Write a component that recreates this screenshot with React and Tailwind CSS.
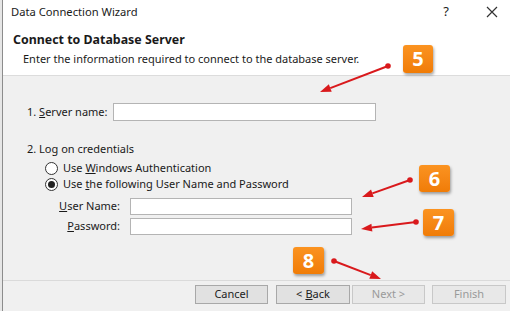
import React from "react";

const font = { fontFamily: '"Noto Sans", "Open Sans", sans-serif' };

function Badge({ n, cls }) {
  return (
    <div
      className={`absolute flex items-center justify-center rounded-[3px] bg-gradient-to-b from-[#fb9320] to-[#f07c06] text-white font-bold text-[20px] leading-none shadow-[1px_2px_3px_rgba(0,0,0,0.35)] ${cls}`}
    >
      {n}
    </div>
  );
}

function Arrow({ x1, y1, x2, y2 }) {
  const dx = x2 - x1;
  const dy = y2 - y1;
  const len = Math.hypot(dx, dy);
  const ux = dx / len;
  const uy = dy / len;
  const hl = 11;
  const hw = 4;
  const bx = x2 - ux * hl;
  const by = y2 - uy * hl;
  const p1 = `${x2},${y2}`;
  const p2 = `${bx - uy * hw},${by + ux * hw}`;
  const p3 = `${bx + uy * hw},${by - ux * hw}`;
  return (
    <g>
      <line x1={x1} y1={y1} x2={bx} y2={by} stroke="#d9191c" strokeWidth="2" />
      <circle cx={x1} cy={y1} r="2.8" fill="#d9191c" />
      <polygon points={`${p1} ${p2} ${p3}`} fill="#d9191c" />
    </g>
  );
}

function Radio({ checked }) {
  return (
    <span className="w-[13px] h-[13px] rounded-full border border-[#333] bg-white flex items-center justify-center shrink-0">
      {checked && <span className="w-[7px] h-[7px] rounded-full bg-[#222]" />}
    </span>
  );
}

function Btn({ children, disabled }) {
  return (
    <div
      className={`h-[19px] flex items-center justify-center border text-[11px] ${
        disabled
          ? "border-[#c8c8c8] bg-[#e8e8e8] text-[#9a9a9a]"
          : "border-[#a8a8a8] bg-[#e1e1e1] text-[#222]"
      }`}
    >
      {children}
    </div>
  );
}

export default function App() {
  return (
    <div
      className="relative w-[510px] h-[311px] overflow-hidden bg-[#ececec] flex text-[#1a1a1a]"
      style={font}
    >
      <div className="w-[2px] bg-[#e6e6e6] shrink-0" />
      <div className="flex-1 flex flex-col border-l border-[#8c8c8c] bg-[#f0f0f0]">
        {/* Header */}
        <div className="h-[76px] bg-white border-b border-[#dcdcdc] flex flex-col shrink-0">
          <div className="h-[24px] flex items-center pl-[8px] pr-[12px] text-[11.2px]">
            <span>Data Connection Wizard</span>
            <span className="ml-auto mr-[37px] text-[13px]">?</span>
            <svg width="12" height="12" viewBox="0 0 12 12">
              <path d="M1 1L11 11M11 1L1 11" stroke="#333" strokeWidth="1.2" />
            </svg>
          </div>
          <div className="pl-[10px] pt-[7px] text-[12.4px] font-bold leading-[18px]">
            Connect to Database Server
          </div>
          <div className="pl-[20px] pt-[1px] text-[11px] leading-[18px]">
            Enter the information required to connect to the database server.
          </div>
        </div>

        {/* Body */}
        <div className="flex-1 flex flex-col pl-[24px] text-[11px]">
          <div className="mt-[27px] h-[18px] flex items-center">
            <span className="w-[86px]">
              1. <span className="underline">S</span>erver name:
            </span>
            <div className="w-[263px] h-[18px] bg-white border border-[#b4b4b4]" />
          </div>
          <div className="mt-[20px] h-[16px] flex items-center">2. Log on credentials</div>
          <div className="mt-[3px] h-[16px] flex items-center pl-[18px] gap-[5px]">
            <Radio />
            <span>
              Use <span className="underline">W</span>indows Authentication
            </span>
          </div>
          <div className="h-[16px] flex items-center pl-[18px] gap-[5px]">
            <Radio checked />
            <span>
              Use <span className="underline">t</span>he following User Name and Password
            </span>
          </div>
          <div className="mt-[6px] h-[17px] flex items-center">
            <span className="w-[93px] text-right">
              <span className="underline">U</span>ser Name:
            </span>
            <div className="ml-[10px] w-[222px] h-[17px] bg-white border border-[#b4b4b4]" />
          </div>
          <div className="mt-[3px] h-[17px] flex items-center">
            <span className="w-[93px] text-right">
              <span className="underline">P</span>assword:
            </span>
            <div className="ml-[10px] w-[222px] h-[17px] bg-white border border-[#b4b4b4]" />
          </div>
        </div>

        {/* Footer */}
        <div className="h-[31px] border-t border-[#dadada] flex items-start pt-[4px] shrink-0">
          <div className="ml-[192px] w-[73px]">
            <Btn>Cancel</Btn>
          </div>
          <div className="ml-[8px] w-[74px]">
            <Btn>
              &lt; <span className="underline ml-[3px]">B</span>ack
            </Btn>
          </div>
          <div className="ml-[2px] w-[73px]">
            <Btn disabled>Next &gt;</Btn>
          </div>
          <div className="ml-[7px] w-[74px]">
            <Btn disabled>Finish</Btn>
          </div>
        </div>
      </div>

      {/* Annotations */}
      <svg className="absolute inset-0 pointer-events-none" width="510" height="311">
        <Arrow x1={388} y1={66} x2={320} y2={92} />
        <Arrow x1={410} y1={180} x2={362} y2={197} />
        <Arrow x1={416} y1={222} x2={361} y2={229} />
        <Arrow x1={334} y1={261} x2={381} y2={279} />
      </svg>
      <Badge n="5" cls="left-[403px] top-[45px] w-[30px] h-[28px]" />
      <Badge n="6" cls="left-[419px] top-[165px] w-[31px] h-[27px]" />
      <Badge n="7" cls="left-[423px] top-[209px] w-[31px] h-[27px]" />
      <Badge n="8" cls="left-[293px] top-[247px] w-[31px] h-[27px]" />
    </div>
  );
}
